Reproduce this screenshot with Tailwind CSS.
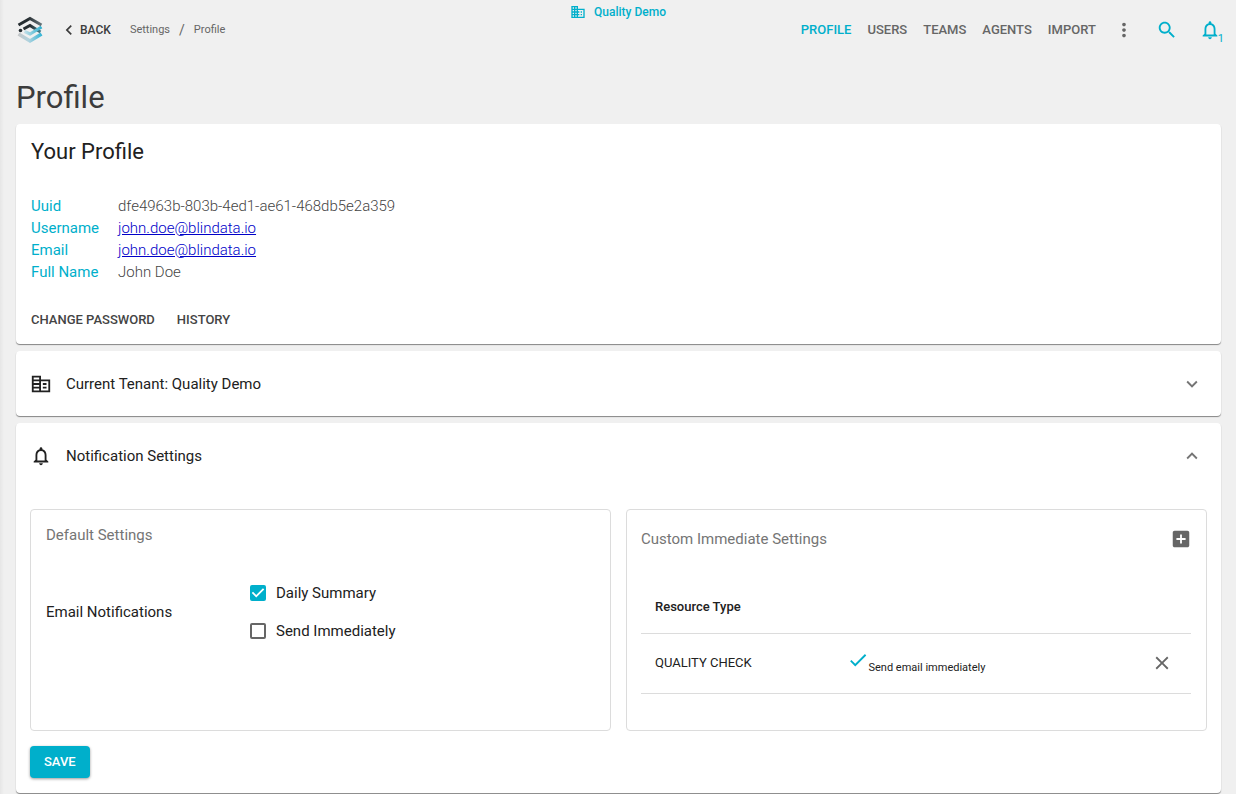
<!DOCTYPE html>
<html lang="en">
<head>
<meta charset="utf-8">
<meta name="viewport" content="width=device-width, initial-scale=1">
<title>Profile</title>
<script src="https://cdn.jsdelivr.net/npm/@tailwindcss/browser@4"></script>
</head>
<body class="min-h-screen bg-[#f0f0f0] bg-linear-to-r from-[#e6e6e6] to-[#f0f0f0] to-[4px] font-['Roboto',sans-serif] text-[15px] leading-[22px] text-[#212121]">

<header class="grid grid-cols-[1fr_auto_1fr] h-[60px] px-3">
  <div class="flex items-center pl-1">
    <a href="#" aria-label="Home" class="block">
      <svg class="size-7" viewBox="0 0 28 28" fill="none" stroke-width="3">
        <defs>
          <linearGradient id="roof" x1="0" x2="1"><stop offset=".4" stop-color="#262d31"/><stop offset="1" stop-color="#68757a"/></linearGradient>
          <linearGradient id="base" x1="0" x2="1"><stop offset="0" stop-color="#c4c6c8"/><stop offset=".45" stop-color="#b0d3df"/><stop offset="1" stop-color="#35b5d6"/></linearGradient>
          <linearGradient id="band" x1="0" x2="1"><stop offset="0" stop-color="#c4dfe8"/><stop offset="1" stop-color="#2fb0cf"/></linearGradient>
          <linearGradient id="core" x1="0" x2="1"><stop offset=".4" stop-color="#262d31"/><stop offset="1" stop-color="#4a7f8c"/></linearGradient>
        </defs>
        <path d="M2.500 9 14 2.500 25.500 9" stroke="url(#roof)"/>
        <path d="M2.500 18 14 25 25.500 18" stroke="url(#base)" stroke-width="3.600"/>
        <path d="M7.500 13 14 9.500 24.500 16" stroke="url(#core)"/>
        <path d="M25.500 11 14 18 8.500 15.500" stroke="url(#band)" stroke-width="3.200"/>
        <circle cx="4.500" cy="14.500" r="1.800" fill="#262d31"/>
      </svg>
    </a>
    <a href="#" class="flex items-center gap-px ml-[15px] text-[12px] font-medium text-[#3c3c3c]">
      <svg class="size-5" viewBox="0 0 24 24" fill="currentColor"><path d="M15.410 7.410 14 6l-6 6 6 6 1.410-1.410L10.830 12z"/></svg>
      BACK
    </a>
    <nav aria-label="Breadcrumb" class="flex items-center gap-[9px] ml-[19px] text-[11px] text-[#666]">
      <a href="#">Settings</a><span class="text-sm">/</span><a href="#">Profile</a>
    </nav>
  </div>

  <div class="flex items-center gap-2 h-6 text-[12px] font-medium text-[#00afcb]">
    <svg class="size-4" viewBox="0 0 24 24" fill="currentColor"><path d="M12 7V3H2v18h20V7H12zM6 19H4v-2h2v2zm0-4H4v-2h2v2zm0-4H4V9h2v2zm0-4H4V5h2v2zm4 12H8v-2h2v2zm0-4H8v-2h2v2zm0-4H8V9h2v2zm0-4H8V5h2v2zm10 12h-8v-2h2v-2h-2v-2h2v-2h-2V9h8v10zm-2-8h-2v2h2v-2zm0 4h-2v2h2v-2z"/></svg>
    Quality Demo
  </div>

  <div class="flex items-center justify-end">
    <nav aria-label="Settings" class="flex gap-4 text-[13px] font-medium text-[#666]">
      <a href="#" aria-current="page" class="text-[#00afcb]">PROFILE</a>
      <a href="#">USERS</a>
      <a href="#">TEAMS</a>
      <a href="#">AGENTS</a>
      <a href="#">IMPORT</a>
    </nav>
    <button type="button" aria-label="More" class="ml-[17px] text-[#666]">
      <svg class="size-[22px]" viewBox="0 0 24 24" fill="currentColor"><path d="M12 8c1.100 0 2-.9 2-2s-.9-2-2-2-2 .9-2 2 .9 2 2 2zm0 2c-1.100 0-2 .9-2 2s.9 2 2 2 2-.9 2-2-.9-2-2-2zm0 6c-1.100 0-2 .9-2 2s.9 2 2 2 2-.9 2-2-.9-2-2-2z"/></svg>
    </button>
    <button type="button" aria-label="Search" class="ml-[21px] text-[#00afcb]">
      <svg class="size-[22px]" viewBox="0 0 24 24" fill="currentColor"><path d="M15.500 14h-.79l-.28-.27C15.410 12.590 16 11.110 16 9.500 16 5.910 13.090 3 9.500 3S3 5.910 3 9.500 5.910 16 9.500 16c1.610 0 3.090-.59 4.230-1.570l.27.28v.79l5 4.990L20.490 19l-4.990-5zm-6 0C7.010 14 5 11.990 5 9.500S7.010 5 9.500 5 14 7.010 14 9.500 11.990 14 9.500 14z"/></svg>
    </button>
    <button type="button" aria-label="1 notification" class="flex items-end ml-[21px] text-[#00afcb]">
      <svg class="size-[22px]" viewBox="0 0 24 24" fill="currentColor"><path d="M12 22c1.100 0 2-.9 2-2h-4c0 1.100.9 2 2 2zm6-6v-5c0-3.070-1.630-5.640-4.500-6.320V4c0-.83-.67-1.500-1.500-1.500s-1.500.67-1.500 1.500v.68C7.640 5.360 6 7.920 6 11v5l-2 2v1h16v-1l-2-2zm-2 1H8v-6c0-2.480 1.510-4.500 4-4.500s4 2.020 4 4.500v6z"/></svg>
      <span class="-ml-[3px] -mb-1 text-[11px] leading-3">1</span>
    </button>
  </div>
</header>

<main class="flex flex-col gap-[6px] px-4 pt-[18px] pr-[15px]">
  <h1 class="text-[31px] leading-10 text-[#3c3c3c]">Profile</h1>

  <section class="mb-px rounded bg-white px-[15px] pt-3 pb-[13px] shadow-[0_1px_1px_rgba(0,0,0,0.45)]">
    <h2 class="text-[22px] leading-8">Your Profile</h2>
    <dl class="mt-[27px] grid grid-cols-[87px_1fr] font-light text-[#444]">
      <dt class="font-normal text-[#00afcb]">Uuid</dt><dd>dfe4963b-803b-4ed1-ae61-468db5e2a359</dd>
      <dt class="font-normal text-[#00afcb]">Username</dt><dd><a href="mailto:john.doe@blindata.io" class="text-[#0000c8] underline">john.doe@blindata.io</a></dd>
      <dt class="font-normal text-[#00afcb]">Email</dt><dd><a href="mailto:john.doe@blindata.io" class="text-[#0000c8] underline">john.doe@blindata.io</a></dd>
      <dt class="font-normal text-[#00afcb]">Full Name</dt><dd>John Doe</dd>
    </dl>
    <div class="mt-[26px] flex gap-[22px] text-[13px] font-medium text-[#444]">
      <button type="button">CHANGE PASSWORD</button>
      <button type="button">HISTORY</button>
    </div>
  </section>

  <section class="mb-px rounded bg-white shadow-[0_1px_1px_rgba(0,0,0,0.45)]">
    <button type="button" aria-expanded="false" class="flex w-full items-center gap-[14px] h-[65px] pl-[14px] pr-[18px] text-left">
      <svg class="size-[22px]" viewBox="0 0 24 24" fill="currentColor"><path d="M12 7V3H2v18h20V7H12zm-2 12H4v-2h6v2zm0-4H4v-2h6v2zm0-4H4V9h6v2zm0-4H4V5h6v2zm10 12h-8V9h8v10zm-2-8h-4v2h4v-2zm0 4h-4v2h4v-2z"/></svg>
      <span class="flex-1">Current Tenant: Quality Demo</span>
      <svg class="size-[22px] text-[#757575]" viewBox="0 0 24 24" fill="currentColor"><path d="M16.590 8.590 12 13.170 7.410 8.590 6 10l6 6 6-6z"/></svg>
    </button>
  </section>

  <section class="rounded bg-white shadow-[0_1px_1px_rgba(0,0,0,0.45)]">
    <button type="button" aria-expanded="true" class="flex w-full items-center gap-[14px] h-[65px] pl-[14px] pr-[18px] text-left">
      <svg class="size-[22px]" viewBox="0 0 24 24" fill="currentColor"><path d="M12 22c1.100 0 2-.9 2-2h-4c0 1.100.9 2 2 2zm6-6v-5c0-3.070-1.630-5.640-4.500-6.320V4c0-.83-.67-1.500-1.500-1.500s-1.500.67-1.500 1.500v.68C7.640 5.360 6 7.920 6 11v5l-2 2v1h16v-1l-2-2zm-2 1H8v-6c0-2.480 1.510-4.500 4-4.500s4 2.020 4 4.500v6z"/></svg>
      <span class="flex-1">Notification Settings</span>
      <svg class="size-[22px] text-[#757575]" viewBox="0 0 24 24" fill="currentColor"><path d="m12 8-6 6 1.410 1.410L12 10.830l4.590 4.580L18 14z"/></svg>
    </button>

    <form class="px-[14px] pt-[21px] pb-[15px]">
      <div class="grid grid-cols-2 gap-[15px]">
        <div class="rounded border border-[#dcdcdc] px-[15px] pt-[14px]">
          <h3 class="text-[#757575]">Default Settings</h3>
          <fieldset class="mt-7 grid grid-cols-[204px_1fr] items-center">
            <span id="email-notifications">Email Notifications</span>
            <div role="group" aria-labelledby="email-notifications">
              <label class="flex items-center gap-[10px] h-[38px]">
                <span class="grid size-4">
                  <input type="checkbox" checked class="peer col-start-1 row-start-1 size-4 appearance-none rounded-xs border-2 border-[#666] checked:border-[#00afcb] checked:bg-[#00afcb]">
                  <svg class="col-start-1 row-start-1 hidden size-4 peer-checked:block" viewBox="3 3 18 18" fill="#fff"><path d="M10 17 5 12l1.410-1.410L10 14.170l7.590-7.590L19 8z"/></svg>
                </span>
                Daily Summary
              </label>
              <label class="flex items-center gap-[10px] h-[38px]">
                <span class="grid size-4">
                  <input type="checkbox" class="peer col-start-1 row-start-1 size-4 appearance-none rounded-xs border-2 border-[#666] checked:border-[#00afcb] checked:bg-[#00afcb]">
                  <svg class="col-start-1 row-start-1 hidden size-4 peer-checked:block" viewBox="3 3 18 18" fill="#fff"><path d="M10 17 5 12l1.410-1.410L10 14.170l7.590-7.590L19 8z"/></svg>
                </span>
                Send Immediately
              </label>
            </div>
          </fieldset>
        </div>

        <div class="rounded border border-[#dcdcdc] pl-[14px] pr-[15px] pt-[14px] pb-9">
          <div class="flex items-center justify-between h-[30px]">
            <h3 class="text-[#757575]">Custom Immediate Settings</h3>
            <button type="button" aria-label="Add" class="-mr-px text-[#666]">
              <svg class="size-[22px]" viewBox="0 0 24 24" fill="currentColor"><path d="M19 3H5c-1.110 0-2 .9-2 2v14c0 1.100.89 2 2 2h14c1.100 0 2-.9 2-2V5c0-1.100-.9-2-2-2zm-2 10h-4v4h-2v-4H7v-2h4V7h2v4h4v2z"/></svg>
            </button>
          </div>
          <table class="mt-7 w-full table-fixed text-left text-[13px]">
            <thead>
              <tr class="h-[51px] border-b border-[#dcdcdc]">
                <th scope="col" class="w-[35%] pl-[14px] font-medium">Resource Type</th>
                <th scope="col" aria-label="Delivery"></th>
                <th scope="col" aria-label="Remove" class="w-20"></th>
              </tr>
            </thead>
            <tbody>
              <tr class="h-[60px] border-b border-[#dcdcdc]">
                <td class="pl-[14px]">QUALITY CHECK</td>
                <td class="pt-0.5 pl-[13px] text-[11px]"><svg class="inline size-[22px] align-baseline text-[#00afcb]" viewBox="0 0 24 24" fill="currentColor"><path d="M9 16.170 4.830 12l-1.420 1.410L9 19 21 7l-1.410-1.410z"/></svg><span>Send email immediately</span></td>
                <td class="pl-10"><button type="button" aria-label="Remove" class="block text-[#666]"><svg class="size-[22px]" viewBox="0 0 24 24" fill="currentColor"><path d="M19 6.410 17.590 5 12 10.590 6.410 5 5 6.410 10.590 12 5 17.590 6.410 19 12 13.410 17.590 19 19 17.590 13.410 12z"/></svg></button></td>
              </tr>
            </tbody>
          </table>
        </div>
      </div>
      <button type="submit" class="mt-[15px] block h-8 rounded bg-[#00afcb] px-[14px] text-[13px] font-medium text-white shadow-[0_1px_3px_rgba(0,0,0,0.4)]">SAVE</button>
    </form>
  </section>
</main>
</body>
</html>
